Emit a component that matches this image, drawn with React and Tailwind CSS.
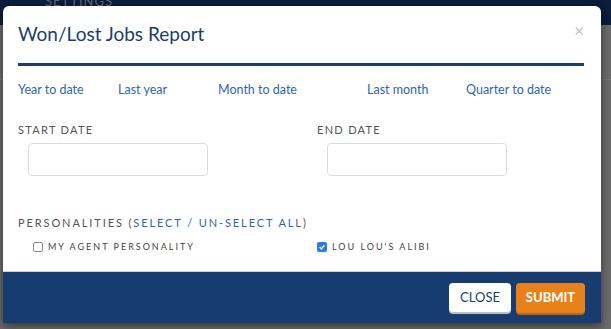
import React from 'react';

const links = [
  { label: 'Year to date', w: 'w-[100px]' },
  { label: 'Last year', w: 'w-[100px]' },
  { label: 'Month to date', w: 'w-[149px]' },
  { label: 'Last month', w: 'w-[99px]' },
  { label: 'Quarter to date', w: 'w-[110px]' },
];

const Checkbox = ({ checked, label }) => (
  <label className="flex items-center gap-[5px]">
    {checked ? (
      <span className="w-[10px] h-[10px] rounded-[2px] bg-[#2f7be6] flex items-center justify-center">
        <svg viewBox="0 0 10 10" className="w-[8px] h-[8px]">
          <path d="M2 5.2 L4.2 7.4 L8 2.6" fill="none" stroke="white" strokeWidth="1.6" />
        </svg>
      </span>
    ) : (
      <span className="w-[10px] h-[10px] rounded-[2px] border border-[#8a8a8a] bg-white" />
    )}
    <span className="text-[9px] tracking-[2px] text-[#444]">{label}</span>
  </label>
);

const App = () => {
  return (
    <div
      className="relative w-[611px] h-[329px] overflow-hidden bg-[#6b6b6b]"
      style={{ fontFamily: 'Lato, "Open Sans", Arial, sans-serif' }}
    >
      {/* page behind the overlay */}
      <div className="h-[25px] bg-[#0b1d3b] pl-[45px] overflow-hidden">
        <span className="block -mt-[8px] text-[13px] tracking-[1px] text-[#5b6680]">SETTINGS</span>
      </div>
      <div className="h-[55px] border-b border-[#777]" />

      {/* modal */}
      <div className="absolute left-[3px] top-[6px] w-[598px] h-[317px] bg-white rounded-t-[6px] shadow-[0_3px_8px_rgba(0,0,0,0.5)] flex flex-col overflow-hidden">
        <div className="px-[15px] pt-[15px] relative">
          <h2 className="text-[19px] leading-[25px] text-[#1b3d6e]">Won/Lost Jobs Report</h2>
          <span className="absolute right-[17px] top-[12px] text-[17px] text-[#c2c2c2]">×</span>
          <div className="mt-[17px] h-[3px] bg-[#1b3f74] mr-[2px]" />
        </div>

        <div className="px-[15px] pt-[15px] flex text-[12.5px] text-[#2f66b3]">
          {links.map((l) => (
            <span key={l.label} className={l.w}>{l.label}</span>
          ))}
        </div>

        <div className="px-[15px] pt-[22px] flex">
          <div className="w-[299px]">
            <div className="text-[11px] tracking-[1.3px] text-[#555]">START DATE</div>
            <div className="ml-[10px] mt-[5px] w-[180px] h-[33px] border border-[#dcdcdc] rounded-[4px]" />
          </div>
          <div>
            <div className="text-[11px] tracking-[1.3px] text-[#555]">END DATE</div>
            <div className="ml-[10px] mt-[5px] w-[180px] h-[33px] border border-[#dcdcdc] rounded-[4px]" />
          </div>
        </div>

        <div className="px-[15px] pt-[39px] text-[11px] tracking-[1.9px] text-[#555]">
          PERSONALITIES (<span className="text-[#2f66b3]">SELECT / UN-SELECT ALL</span>)
        </div>
        <div className="pl-[30px] pt-[8px] flex">
          <div className="w-[284px]">
            <Checkbox label="MY AGENT PERSONALITY" />
          </div>
          <Checkbox checked label="LOU LOU'S ALIBI" />
        </div>

        <div className="mt-auto h-[52px] bg-[#173d70] border-t border-[#c9d3e0] flex items-center justify-end gap-[5px] pr-[16px]">
          <button className="h-[29px] w-[62px] bg-white rounded-[4px] shadow-[0_2px_0_#b9c0c8] text-[13px] text-[#1b3d6e]">
            CLOSE
          </button>
          <button className="h-[30px] w-[69px] bg-[#e8811a] rounded-[4px] shadow-[0_2px_0_#b8650f] text-[13px] font-bold text-white">
            SUBMIT
          </button>
        </div>
      </div>
    </div>
  );
};

export default App;
